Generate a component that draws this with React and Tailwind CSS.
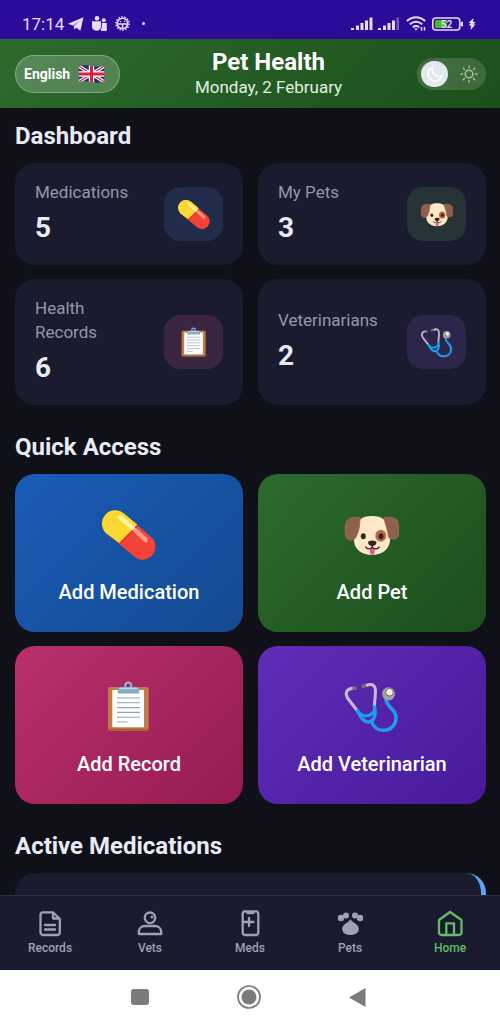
import { useState } from 'react'

function PillIcon({ className }) {
  return (
    <svg viewBox="0 0 60 56" className={className} aria-hidden="true">
      <path d="M16.200 16.500L43.500 39.700" stroke="#f44336" strokeWidth="26" strokeLinecap="round" />
      <path d="M20.300 35.700L7.600 26.600A13.300 13.300 0 0 1 24.800 6.400L38.200 17.800Z" fill="#fdd835" />
      <path d="M20.300 35.700L7.600 26.600A13 13 0 1 1 24.800 6.400L38.200 17.800Z" fill="#fdd835" />
      <path d="M20.300 35.700L38.200 17.800L39 18.600L21.500 37Z" fill="#c62828" opacity=".6" />
      <path d="M21.500 10.500L33.500 20.800" stroke="#fff59d" strokeWidth="4.500" strokeLinecap="round" />
      <path d="M36.500 23.500L47 33" stroke="#ff9a8d" strokeWidth="4.500" strokeLinecap="round" />
    </svg>
  )
}

function DogIcon({ className }) {
  return (
    <svg viewBox="0 0 60 56" className={className} aria-hidden="true">
      <path d="M30 9C41 9 44 13 45 21C46 26 48.500 28 48 34C47 43 39 48 30 48C21 48 12.500 43 12 34C11.500 28 14 26 15 21C16 13 19 9 30 9Z" fill="#ffe8c8" />
      <path d="M18 11C12 9.500 6 11 4.500 15C2.500 20 3 27 4 30C5 33.500 12 34.500 14 30C16.500 25 18 19 18 11Z" fill="#8d6152" stroke="#b9603f" strokeWidth="1" />
      <path d="M42 11C48 9.500 54 11 55.500 14C57 19 57 26 56 29.500C55 32.500 48 33 46.500 30C46 23 43.500 18 42 11Z" fill="#8d6152" stroke="#b9603f" strokeWidth="1" />
      <ellipse cx="38.800" cy="28.700" rx="5.500" ry="6" fill="#b96a45" />
      <ellipse cx="21.300" cy="29.300" rx="2.500" ry="3" fill="#33261f" />
      <ellipse cx="39" cy="29.300" rx="2.500" ry="3" fill="#33261f" />
      <path d="M26 35.500C26 32.800 34.500 32.800 34.500 35.500C34.500 37.500 32 39 30.300 39C28.500 39 26 37.500 26 35.500Z" fill="#33261f" />
      <path d="M28 41.500H32.600V45.500A2.300 2.300 0 0 1 28 45.500Z" fill="#f0508c" />
      <path d="M23.800 40C25 42.500 29 42.500 30.300 40C31.500 42.500 36 42.500 37.300 40M30.300 38V40.500" fill="none" stroke="#33261f" strokeWidth="1.400" strokeLinecap="round" />
    </svg>
  )
}

function ClipboardIcon({ className }) {
  return (
    <svg viewBox="0 0 60 56" className={className} aria-hidden="true">
      <rect x="9" y="8" width="40.700" height="43.700" rx="2" fill="#c27c45" />
      <path d="M10 50.500H48.800" stroke="#a05f2c" strokeWidth="1.500" />
      <path d="M13.300 11H45V48.300H13.300Z" fill="#fff" />
      <path d="M18 19H41M18 23.800H41M18 28.600H41M18 33.400H41M18 38.200H41M18 43H28.500" stroke="#93a7b5" strokeWidth="1.100" />
      <circle cx="29.200" cy="6.500" r="3" fill="none" stroke="#8fb8cc" strokeWidth="2" />
      <path d="M18.700 14.500V10.500Q19 8 22 8H37Q40 8 40.300 10.500V14.500Z" fill="#82aec1" />
      <path d="M21 9.500H38" stroke="#b9d8e4" strokeWidth="1.500" strokeLinecap="round" />
    </svg>
  )
}

function StethoscopeIcon({ className }) {
  return (
    <svg viewBox="0 0 60 56" className={className} aria-hidden="true">
      <g fill="none" strokeLinecap="round" strokeLinejoin="round" strokeWidth="3">
        <path d="M11 9.300C5 9.500 2.500 14 5.500 19L15.500 32" stroke="#cbb9d4" />
        <path d="M24 6.500C31 3.800 33.800 7 33.500 13L32.300 28" stroke="#cbb9d4" />
        <path d="M10.500 9.300H14.500M19.500 7.800L24 6.500" stroke="#756d6d" strokeWidth="3.500" strokeLinecap="butt" />
        <path d="M15.500 32C19 38 21 43 26.500 43C33 42 34 35 32.500 28" stroke="#1e9df0" strokeWidth="3.500" />
        <path d="M16.500 33C21 38.500 29 38.500 32.500 31" stroke="#1e9df0" />
        <path d="M29.500 42.500C31.500 48 36 51.500 41.500 51.300C50 51 54 45 54 38.500C54 29 43.500 29 44 18.500" stroke="#1e9df0" strokeWidth="3.500" />
      </g>
      <circle cx="46.500" cy="14.800" r="6.500" fill="#a8a19b" />
      <circle cx="47.500" cy="13.300" r="3.800" fill="#f1efee" stroke="#706d6b" strokeWidth="1" />
    </svg>
  )
}

function UkFlag() {
  return (
    <svg viewBox="0 0 26 18" className="w-[27px] h-[18px]" aria-hidden="true">
      <defs>
        <clipPath id="flag">
          <path d="M0 1.500Q6 -.5 13 1T26 1V16.500Q20 18.500 13 17T0 17Z" />
        </clipPath>
      </defs>
      <g clipPath="url(#flag)">
        <path d="M0 0H26V18H0Z" fill="#1a2f7a" />
        <path d="M0 1L26 17M26 1L0 17" stroke="#fff" strokeWidth="3.400" />
        <path d="M0 1L26 17M26 1L0 17" stroke="#d3203f" strokeWidth="1.300" />
        <path d="M13 0V18M0 9H26" stroke="#fff" strokeWidth="5.400" />
        <path d="M13 0V18M0 9H26" stroke="#d3203f" strokeWidth="3" />
      </g>
    </svg>
  )
}

function StatusBar() {
  return (
    <div className="h-[39px] shrink-0 bg-[#2c0b98] text-[#e6dcff] flex items-center justify-between pl-[22px] pr-6 pt-2">
      <div className="flex items-center gap-1">
        <span className="text-[17px] leading-6">17:14</span>
        <svg viewBox="0 0 16 14" className="w-4 h-3.5" fill="currentColor" aria-hidden="true">
          <path d="M15.500 .3L0 6.800L4.500 8.600L11.500 4L6 9.200V12.500L8.300 10.800L12.400 13.800Z" />
          <path d="M4.500 8.600L12.500 3L6 9.400Z" opacity=".6" />
        </svg>
        <svg viewBox="0 0 15 15" className="w-[15px] h-[15px] ml-1" fill="currentColor" aria-hidden="true">
          <circle cx="5" cy="2.300" r="2.300" />
          <circle cx="11.800" cy="4.300" r="2" />
          <path d="M0 5.300H9V10.500A4.500 4.300 0 0 1 0 10.500ZM9.800 7H14.800V11.500A3 3 0 0 1 8.500 13.600Q9.800 12.500 9.800 10.500Z" />
        </svg>
        <svg viewBox="0 0 16 16" className="w-[15px] h-[15px] ml-1" fill="none" stroke="currentColor" aria-hidden="true">
          <circle cx="8" cy="8" r="5.500" strokeWidth="1.600" />
          <circle cx="8" cy="8" r="7" strokeWidth="1.600" strokeDasharray="1.700 1.440" />
          <path d="M3 8.500H13M8 8.500V13M5.500 5.800H6.500M9.500 5.800H10.500" strokeWidth="1.500" />
        </svg>
        <span className="ml-2 w-[3px] h-[3px] rounded-full bg-current" />
      </div>
      <div className="flex items-center gap-[5px]">
        <svg viewBox="0 0 22 13" className="w-[22px] h-[13px]" fill="currentColor" aria-hidden="true">
          <path d="M0 11H3V13H0ZM5 8.500H8V13H5ZM9.500 6H12.500V13H9.500ZM14 3.500H17V13H14ZM18.500 .5H21.500V13H18.500Z" />
        </svg>
        <svg viewBox="0 0 22 13" className="w-[22px] h-[13px]" fill="currentColor" aria-hidden="true">
          <path d="M0 11H3V13H0ZM5 8.500H8V13H5ZM9.500 6H12.500V13H9.500ZM14 3.500H17V13H14Z" />
          <path d="M18.500 .5H21V13H18.500Z" opacity=".4" />
        </svg>
        <svg viewBox="0 0 20 15" className="w-[22px] h-[15px]" fill="none" stroke="currentColor" aria-hidden="true">
          <path d="M.8 5Q10 -2.500 19.200 5M3.800 8.300Q10 3.300 16.200 8.300M6.800 11.300Q10 8.800 13.200 11.300" strokeWidth="2" />
          <path d="M8 12.500L10 14.500L12 12.500Z" fill="currentColor" stroke="none" />
          <path d="M15.500 11V14.500M18.500 11V14.500" strokeWidth="1.500" />
        </svg>
        <svg viewBox="0 0 31 14" className="w-[31px] h-3.5" aria-hidden="true">
          <rect x=".8" y="1" width="27" height="12" rx="3" fill="none" stroke="#e6dcff" strokeWidth="1.600" />
          <rect x="3" y="3" width="12" height="8" rx="1" fill="#4fb52c" />
          <rect x="29" y="4.500" width="2" height="5" rx="1" fill="#e6dcff" />
          <text x="14.500" y="10.500" textAnchor="middle" fontSize="10" fontWeight="600" fill="#e6dcff">52</text>
        </svg>
        <svg viewBox="0 0 8 12" className="w-2 h-3" fill="currentColor" aria-hidden="true">
          <path d="M5.500 0L.5 5H3L.5 7.500H3L2.500 12L7.500 6.500H5.200L7.800 4H5Z" />
        </svg>
      </div>
    </div>
  )
}

function ThemeToggle() {
  const [dark, setDark] = useState(true)

  return (
    <label className={`relative w-[69px] h-8 rounded-full bg-white/15 flex items-center justify-between pl-1 pr-2 cursor-pointer ${dark ? '' : 'flex-row-reverse'}`}>
      <input type="checkbox" aria-label="Dark mode" checked={dark} onChange={(e) => setDark(e.target.checked)} className="absolute inset-0 w-full h-full opacity-0 cursor-pointer" />
      <span className="w-[27px] h-[26px] rounded-full bg-[#e3e8f1] flex items-center justify-center">
        <svg viewBox="0 0 16 16" className="w-4 h-4" fill="none" stroke="#fff" strokeWidth="1.600" strokeLinejoin="round" aria-hidden="true">
          <path d="M5.500 1.500A7 7 0 1 0 14.800 9.600A5.500 5.500 0 0 1 9 9.500A6.500 6.500 0 0 1 5.500 1.500Z" />
        </svg>
      </span>
      <svg viewBox="0 0 18 18" className="w-[18px] h-[18px] opacity-70" fill="none" stroke="#dbe8d4" strokeWidth="1.400" strokeLinecap="round" aria-hidden="true">
        <circle cx="9" cy="9" r="3.800" />
        <path d="M9 1V2.500M9 15.500V17M1 9H2.500M15.500 9H17M3.300 3.300L4.400 4.400M13.600 13.600L14.700 14.700M3.300 14.700L4.400 13.600M13.600 4.400L14.700 3.300" />
      </svg>
    </label>
  )
}

const stats = [
  { label: 'Medications', value: 5, Icon: PillIcon, tile: 'bg-[#242c4b]' },
  { label: 'My Pets', value: 3, Icon: DogIcon, tile: 'bg-[#273336]' },
  { label: 'Health Records', value: 6, Icon: ClipboardIcon, tile: 'bg-[#3a2641]' },
  { label: 'Veterinarians', value: 2, Icon: StethoscopeIcon, tile: 'bg-[#2c264b]' },
]

const actions = [
  { label: 'Add Medication', Icon: PillIcon, color: 'from-[#1a5cb8] to-[#144a90]' },
  { label: 'Add Pet', Icon: DogIcon, color: 'from-[#2d6b2d] to-[#1b4f1b]' },
  { label: 'Add Record', Icon: ClipboardIcon, color: 'from-[#b9306c] to-[#961b52]' },
  { label: 'Add Veterinarian', Icon: StethoscopeIcon, color: 'from-[#5f2db8] to-[#471a9b]' },
]

const tabs = [
  {
    label: 'Records',
    icon: <path d="M7 3.300H17L23.800 10V23.500A2.500 2.500 0 0 1 21.500 26H7A2.500 2.500 0 0 1 4.500 23.500V5.800A2.500 2.500 0 0 1 7 3.300ZM17 3.300V9.500H23.500M9 16H19M9 20.500H19" />,
  },
  {
    label: 'Vets',
    icon: (
      <>
        <circle cx="14" cy="8.800" r="5.300" />
        <circle cx="16" cy="8" r="1.500" fill="currentColor" stroke="none" />
        <path d="M2.800 25V22.500A6 6 0 0 1 8.800 17H19.200A6 6 0 0 1 25.200 22.500V25Z" />
      </>
    ),
  },
  {
    label: 'Meds',
    icon: <path d="M9 2.300H20A2.500 2.500 0 0 1 22.300 4.800V23.500A2.500 2.500 0 0 1 20 26H9A2.500 2.500 0 0 1 6.700 23.500V4.800A2.500 2.500 0 0 1 9 2.300ZM11.500 2.300V4H17.500V2.300M7 13H17.500M13 9V17" />,
  },
  {
    label: 'Pets',
    icon: (
      <g fill="currentColor" stroke="none">
        <circle cx="5" cy="9" r="3.200" />
        <circle cx="10" cy="6.500" r="3" />
        <circle cx="19" cy="6.500" r="3" />
        <circle cx="24" cy="9" r="3.200" />
        <path d="M14.500 10.500Q17 13.500 20 15C25 18.500 23.500 26 14.500 26C5.500 26 4 18.500 9 15Q12 13.500 14.500 10.500Z" />
      </g>
    ),
  },
  {
    label: 'Home',
    active: true,
    icon: <path d="M14 3L25.500 11V23.500A2.500 2.500 0 0 1 23 26H5.500A2.500 2.500 0 0 1 3 23.500V11ZM10.300 26V14.300H18V26" />,
  },
]

export default function App() {
  return (
    <div className="h-screen flex flex-col overflow-hidden bg-[#0f1018] font-['Roboto',sans-serif] text-[#e8eaf6]">
      <StatusBar />

      <header className="h-[69px] shrink-0 flex items-center justify-between pl-[15px] pr-3.5 bg-linear-135 from-[#2d6b2d] to-[#1b4f1b] text-white">
        <button type="button" className="w-[105px] h-[38px] shrink-0 rounded-full border border-white/30 bg-white/20 flex items-center pl-2 gap-2 text-sm font-bold">
          English
          <UkFlag />
        </button>
        <div className="text-center pb-0.5">
          <h1 className="text-2xl leading-7 font-bold">Pet Health</h1>
          <p className="text-[17px] leading-[22px] text-[#e2f0e0]">Monday, 2 February</p>
        </div>
        <ThemeToggle />
      </header>

      <main className="flex-1 min-h-0 overflow-hidden pl-[15px] pr-3.5">
        <section>
          <h2 className="text-2xl leading-7 font-bold mt-3.5 mb-[13px]">Dashboard</h2>
          <div className="grid grid-cols-2 gap-x-[15px] gap-y-3.5">
            {stats.map(({ label, value, Icon, tile }) => (
              <div key={label} className="rounded-[20px] bg-[#1a1b2e] px-5 py-[17px] flex items-center justify-between gap-4">
                <div className="pb-1">
                  <p className="text-[17px] leading-6 text-[#9597aa]">{label}</p>
                  <p className="text-[28px] leading-8 font-bold mt-2">{value}</p>
                </div>
                <div className={`w-[59px] h-[54px] shrink-0 rounded-2xl flex items-center justify-center ${tile}`}>
                  <Icon className="w-9 h-[33px]" />
                </div>
              </div>
            ))}
          </div>
        </section>

        <section>
          <h2 className="text-2xl leading-7 font-bold mt-7 mb-[13px]">Quick Access</h2>
          <div className="grid grid-cols-2 gap-x-[15px] gap-y-3.5">
            {actions.map(({ label, Icon, color }) => (
              <button key={label} type="button" className={`h-[158px] rounded-[20px] bg-linear-135 flex flex-col items-center pt-[33px] text-white ${color}`}>
                <Icon className="w-[60px] h-14" />
                <span className="mt-[17px] text-xl leading-6 font-medium">{label}</span>
              </button>
            ))}
          </div>
        </section>

        <section>
          <h2 className="text-2xl leading-7 font-bold mt-7 mb-[13px]">Active Medications</h2>
          <div className="h-24 rounded-[20px] bg-[#1a1b2e] border-r-[5px] border-[#5ba3f5]" />
        </section>
      </main>

      <nav className="h-[75px] shrink-0 grid grid-cols-5 bg-[#1a1b2e] border-t border-[#2c2d40]">
        {tabs.map(({ label, icon, active }) => (
          <a key={label} href="#" className={`flex flex-col items-center pt-[13px] text-xs leading-[18px] font-medium ${active ? 'text-[#66bb6a]' : 'text-[#9fa1b6]'}`}>
            <svg viewBox="0 0 28 28" className="w-7 h-7 mb-0.5" fill="none" stroke="currentColor" strokeWidth="2.300" strokeLinejoin="round" strokeLinecap="round" aria-hidden="true">
              {icon}
            </svg>
            {label}
          </a>
        ))}
      </nav>

      <div className="h-[54px] shrink-0 bg-white flex items-center justify-center gap-[88px] pr-1 text-[#7b7b7b]">
        <button type="button" aria-label="Recent apps" className="w-[18px] h-4 rounded-[3px] bg-current" />
        <button type="button" aria-label="Home screen">
          <svg viewBox="0 0 24 24" className="w-6 h-6" aria-hidden="true">
            <circle cx="12" cy="12" r="11" fill="none" stroke="currentColor" strokeWidth="1.700" />
            <circle cx="12" cy="12" r="7.500" fill="currentColor" />
          </svg>
        </button>
        <button type="button" aria-label="Back">
          <svg viewBox="0 0 17 19" className="w-[17px] h-[19px]" fill="currentColor" aria-hidden="true">
            <path d="M0 9.500L16.500 0V19Z" />
          </svg>
        </button>
      </div>
    </div>
  )
}
